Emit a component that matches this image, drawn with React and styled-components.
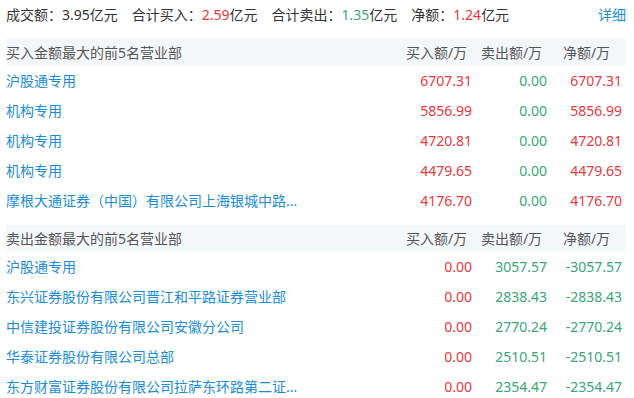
import React from "react";
import styled, { createGlobalStyle } from "styled-components";

const GlobalStyle = createGlobalStyle`
  html, body {
    margin: 0;
    padding: 0;
    background: #fff;
  }
  body {
    font-family: "Noto Sans", "Noto Sans CJK SC", sans-serif;
    font-size: 14px;
    color: #333;
  }
`;

const Panel = styled.div`
  width: 620px;
  padding: 0 8px 0 6px;
`;

const Summary = styled.div`
  display: flex;
  align-items: center;
  height: 28px;
  margin-bottom: 11px;
`;

const Stat = styled.span`
  margin-right: 14px;
  white-space: nowrap;
`;

const Num = styled.span`
  color: ${({ tone }) => (tone === "up" ? "#e8383d" : tone === "down" ? "#3aa776" : "inherit")};
`;

const Detail = styled.a`
  margin-left: auto;
  color: #1a8cd8;
  text-decoration: none;
`;

const Section = styled.div`
  margin-bottom: 10px;
`;

const Row = styled.div`
  display: grid;
  grid-template-columns: 1fr 75px 75px 75px;
  align-items: center;
  height: ${({ head }) => (head ? "26px" : "30px")};
  background: ${({ head }) => (head ? "#f4f7fa" : "transparent")};
  color: ${({ head }) => (head ? "#555" : "#333")};
`;

const Name = styled.span`
  color: #1a8cd8;
  white-space: nowrap;
  overflow: hidden;
`;

const Title = styled.span`
  color: #555;
`;

const HeadCell = styled.span`
  text-align: center;
  padding-right: 4px;
  white-space: nowrap;
`;

const Cell = styled.span`
  text-align: right;
  padding-right: 4px;
  white-space: nowrap;
  color: ${({ tone }) => (tone === "up" ? "#e8383d" : "#3aa776")};
`;

const buyers = [
  ["沪股通专用", "6707.31", "0.00", "6707.31"],
  ["机构专用", "5856.99", "0.00", "5856.99"],
  ["机构专用", "4720.81", "0.00", "4720.81"],
  ["机构专用", "4479.65", "0.00", "4479.65"],
  ["摩根大通证券（中国）有限公司上海银城中路...", "4176.70", "0.00", "4176.70"],
];

const sellers = [
  ["沪股通专用", "0.00", "3057.57", "-3057.57"],
  ["东兴证券股份有限公司晋江和平路证券营业部", "0.00", "2838.43", "-2838.43"],
  ["中信建投证券股份有限公司安徽分公司", "0.00", "2770.24", "-2770.24"],
  ["华泰证券股份有限公司总部", "0.00", "2510.51", "-2510.51"],
  ["东方财富证券股份有限公司拉萨东环路第二证...", "0.00", "2354.47", "-2354.47"],
];

const tone = (v) => (v.startsWith("-") ? "down" : "up");

function Table({ title, rows }) {
  return (
    <Section>
      <Row head>
        <Title>{title}</Title>
        <HeadCell>买入额/万</HeadCell>
        <HeadCell>卖出额/万</HeadCell>
        <HeadCell>净额/万</HeadCell>
      </Row>
      {rows.map(([name, buy, sell, net], i) => (
        <Row key={i}>
          <Name>{name}</Name>
          <Cell tone="up">{buy}</Cell>
          <Cell tone="down">{sell}</Cell>
          <Cell tone={tone(net)}>{net}</Cell>
        </Row>
      ))}
    </Section>
  );
}

export default function App() {
  return (
    <Panel>
      <GlobalStyle />
      <Summary>
        <Stat>成交额：3.95亿元</Stat>
        <Stat>
          合计买入：<Num tone="up">2.59</Num>亿元
        </Stat>
        <Stat>
          合计卖出：<Num tone="down">1.35</Num>亿元
        </Stat>
        <Stat>
          净额：<Num tone="up">1.24</Num>亿元
        </Stat>
        <Detail href="#">详细</Detail>
      </Summary>
      <Table title="买入金额最大的前5名营业部" rows={buyers} />
      <Table title="卖出金额最大的前5名营业部" rows={sellers} />
    </Panel>
  );
}
